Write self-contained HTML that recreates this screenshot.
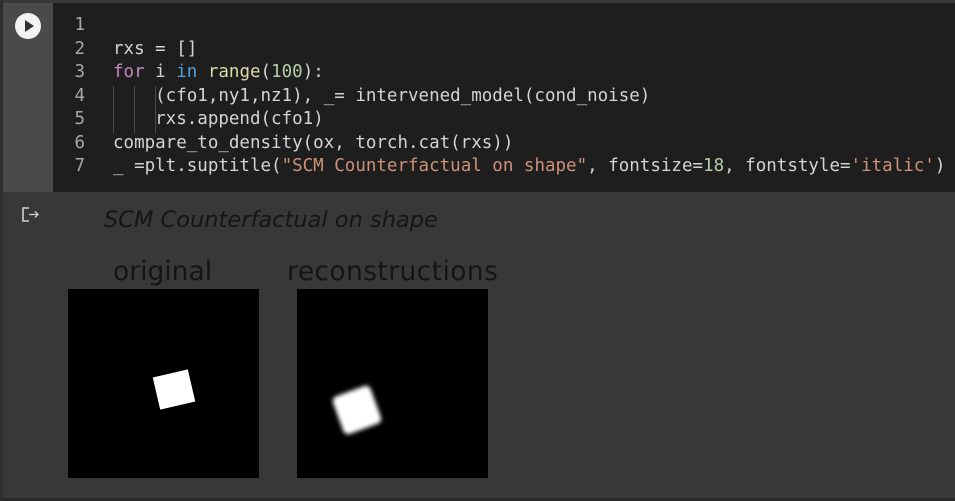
<!DOCTYPE html>
<html><head><style>
html,body{margin:0;padding:0;}
body{width:955px;height:501px;background:#383838;position:relative;overflow:hidden;font-family:"DejaVu Sans",sans-serif;}
.lb{position:absolute;left:0;top:0;width:3px;height:501px;background:#2e2e2e;}
.bb{position:absolute;left:0;top:498px;width:955px;height:3px;background:#2a2a2a;}
.gut{position:absolute;left:3px;top:3px;width:50px;height:189px;background:#4a4a4a;}
.code{position:absolute;left:53px;top:3px;width:902px;height:189px;background:#1e1e1e;}
.run{position:absolute;left:15px;top:13px;width:26px;height:26px;border-radius:50%;background:#f2f2f2;}
.run:after{content:"";position:absolute;left:10px;top:7px;border-left:9px solid #333;border-top:6px solid transparent;border-bottom:6px solid transparent;}
pre{margin:0;position:absolute;top:14px;font-family:"DejaVu Sans Mono","Liberation Mono",monospace;font-size:17.5px;line-height:23.5px;color:#d4d4d4;}
.ln{left:55px;width:30px;text-align:right;color:#a8a8a8;}
.src{left:113px;}
.k{color:#c586c0}.b{color:#569cd6}.f{color:#dcdcaa}.n{color:#b5cea8}.s{color:#ce9178}
.g{position:absolute;width:1px;background:#4a4a4a;}
.t{position:absolute;color:#151515;white-space:nowrap;}
.img{position:absolute;background:#000;}
</style></head><body>
<div class="gut"></div>
<div class="code"></div>
<div class="lb"></div>
<div class="run"></div>
<pre class="ln">1
2
3
4
5
6
7</pre>
<div class="g" style="left:113px;top:86px;height:47px"></div>
<div class="g" style="left:134px;top:86px;height:47px"></div>
<div class="g" style="left:155px;top:86px;height:47px"></div>
<pre class="src">&#8203;
rxs = []
<span class="k">for</span> i <span class="b">in</span> <span class="f">range</span>(<span class="n">100</span>):
    (cfo1,ny1,nz1), _= intervened_model(cond_noise)
    rxs.append(cfo1)
compare_to_density(ox, torch.cat(rxs))
_ =plt.suptitle(<span class="s">"SCM Counterfactual on shape"</span>, fontsize=<span class="n">18</span>, fontstyle=<span class="s">'italic'</span>)</pre>
<svg style="position:absolute;left:20px;top:206px" width="20" height="18" viewBox="0 0 20 18"><path d="M9 2H3v13h6" fill="none" stroke="#d0d0d0" stroke-width="1.6"/><path d="M9 8.5h9M15 5.5l3 3-3 3" fill="none" stroke="#d0d0d0" stroke-width="1.3"/></svg>
<div class="t" style="left:104px;top:207px;font-size:22.5px;font-style:italic;">SCM Counterfactual on shape</div>
<div class="t" style="left:113px;top:256px;font-size:26.5px;">original</div>
<div class="t" style="left:287px;top:256px;font-size:26.5px;letter-spacing:0.4px;">reconstructions</div>
<div class="img" style="left:68px;top:289px;width:191px;height:189px;"></div>
<div class="img" style="left:297px;top:289px;width:191px;height:189px;"></div>
<div style="position:absolute;left:156px;top:373px;width:36px;height:33px;background:#fff;transform:rotate(-13deg);"></div>
<div style="position:absolute;left:337px;top:390px;width:40px;height:40px;background:#fff;transform:rotate(-20deg);border-radius:5px;filter:blur(2px);"></div>
<div class="bb"></div>
</body></html>
